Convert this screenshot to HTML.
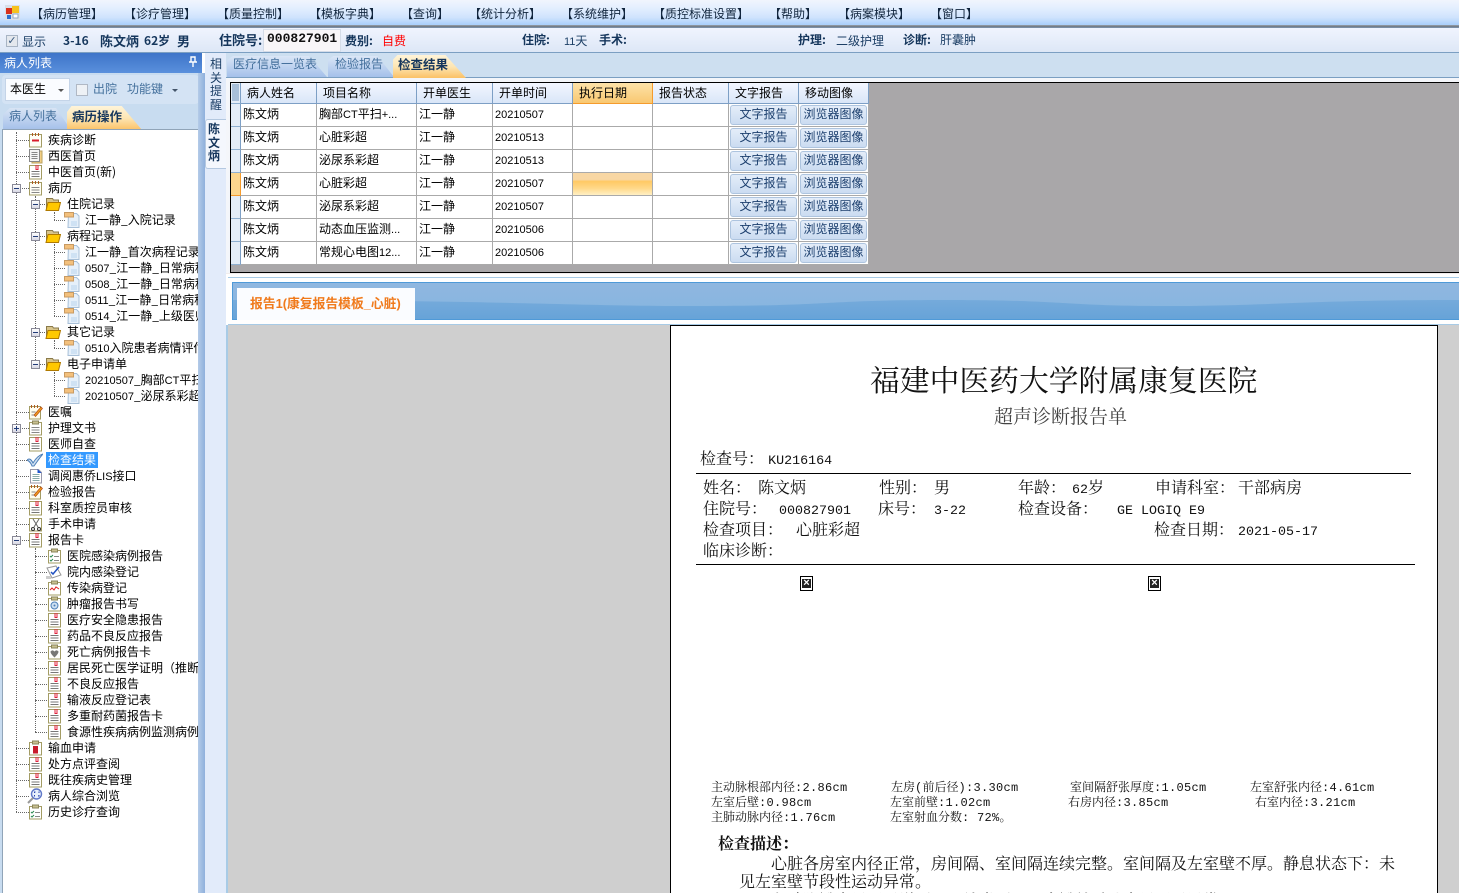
<!DOCTYPE html>
<html lang="zh">
<head>
<meta charset="utf-8">
<title>病历操作</title>
<style>
html,body{margin:0;padding:0;width:1459px;height:893px;overflow:hidden;background:#fff}
body{position:relative;font:12px/16px "WenQuanYi Zen Hei","Noto Sans CJK SC",sans-serif;color:#000}
.a{position:absolute;box-sizing:border-box}
.t{position:absolute;white-space:nowrap;line-height:16px}
.m{font:11px "Liberation Sans",sans-serif}
.b{font-weight:bold;color:#15365c}
.n{color:#1c3f66}
#menu{left:0;top:0;width:1459px;height:25px;background:linear-gradient(#f1f5fd 0,#e2eefe 35%,#cfe3fd 70%,#a9cefb 100%)}
#menu .t{top:6px;color:#10243c}
#bar{left:0;top:28px;width:1459px;height:25px;background:linear-gradient(#f0f4fe,#dde7f6);border-bottom:1px solid #7b9fc2}
#tree{left:3px;top:130px;width:195px;height:763px;background:#fff;overflow:hidden}
#tree .t{color:#000}
#tree svg{position:absolute;width:16px;height:16px;margin-left:-1px}
.dv{position:absolute;width:0;border-left:1px dotted #666}
.dh{position:absolute;height:0;border-top:1px dotted #666}
.ex{position:absolute;width:9px;height:9px;border:1px solid #8a8a98;background:linear-gradient(#fff,#d8d8e4);box-sizing:border-box}
.ex:before{content:"";position:absolute;left:1px;top:3px;width:5px;height:1px;background:#223c78}
.ex.p:after{content:"";position:absolute;left:3px;top:1px;width:1px;height:5px;background:#223c78}
table{position:absolute;left:231px;top:83px;border-collapse:separate;border-spacing:0;table-layout:fixed;width:638px;background:#fff}
td,th{box-sizing:border-box;height:23px;padding:0;border-right:1px solid #aaa;border-bottom:1px solid #aaa;font-weight:normal;text-align:left;white-space:nowrap;overflow:hidden;padding-left:2px;background:#fff;line-height:18px;padding-top:1px;vertical-align:top}
th{height:20px;background:linear-gradient(#f3f6ff,#d9e6f8);border-right:1px solid #7d9fc5;border-bottom:1px solid #7d9fc5;padding:0 0 0 6px;line-height:20px}
th.o{background:linear-gradient(#fde2a8,#f9c871);border-color:#f59b2c}
td.h,th.h{background:#e4edf7;border-right:1px solid #7d9fc5;border-bottom:1px solid #8fb0d0;padding:0}
th.h{background:linear-gradient(#a8bfd8,#a8bfd8) 1px 1px/7px 17px no-repeat #e4edf7}
td.s{background:#fcd68e;border-color:#f59b2c}
td.g{background:linear-gradient(#f8d7a4 0,#f8d7a4 30%,#ffc964 38%,#ffd98a 70%,#fff0c4 100%)}
td.c{padding:1px 1px 0 1px}
td.c div{height:20px;border:1px solid #adc4df;border-radius:3px;background:linear-gradient(#e4edf9,#cbdcf1);color:#1c3f6e;text-align:center;line-height:15px;box-sizing:border-box}
.p{position:absolute;white-space:nowrap;font-family:"Noto Serif CJK SC","Liberation Serif",serif;font-size:16px;line-height:20px;color:#111}
.p .l{font:13.33px "Liberation Mono",monospace}
.s12{font-size:12px;line-height:14px}
.s12 .l{font:12px "Liberation Mono",monospace;letter-spacing:.3px}
.x{position:absolute;width:13px;height:15px;border:1px solid #000;background:#fff;box-sizing:border-box}
.x:before{content:"";position:absolute;left:1px;top:2px;width:9px;height:9px;background:#222}
.x:after{content:"×";position:absolute;left:1px;top:2px;width:9px;height:9px;color:#fff;font:bold 11px/9px "Liberation Sans",sans-serif;text-align:center}
</style>
</head>
<body>
<svg width="0" height="0" style="position:absolute">
<defs>
<symbol id="clip" viewBox="0 0 16 16"><rect x="2.5" y="1.500" width="12" height="13.500" fill="#fff" stroke="#a39c64"/><path d="M4.500 7.500h8M4.500 10h8M4.500 12.500h8" stroke="#777"/><path d="M9 1v4.500h2V1" fill="none" stroke="#e0203c"/></symbol>
<symbol id="note" viewBox="0 0 16 16"><rect x="2.500" y="2.500" width="12" height="12.500" fill="#fffef6" stroke="#a39c64"/><path d="M5.500 1v3M8.500 1v3M11.500 1v3" stroke="#b05a20"/><path d="M4.500 7.500h8M4.500 10h8M4.500 12.500h8" stroke="#888"/></symbol>
<symbol id="red" viewBox="0 0 16 16"><rect x="2.500" y="2.500" width="12" height="12.500" fill="#fffef6" stroke="#a39c64"/><path d="M5.500 1v3M8.500 1v3M11.500 1v3" stroke="#b05a20"/><rect x="5" y="7.500" width="7" height="2" fill="#d81c2c"/></symbol>
<symbol id="pages" viewBox="0 0 16 16"><rect x="5" y="3" width="10" height="12" fill="#f3cf84" stroke="#b8a060"/><rect x="2.500" y="1.500" width="10" height="12" fill="#f6f6f6" stroke="#888"/><path d="M4.500 4.500h6M4.500 6.500h6M4.500 8.500h6M4.500 10.500h6" stroke="#888"/></symbol>
<symbol id="board" viewBox="0 0 16 16"><rect x="2.500" y="2.500" width="12" height="12.500" fill="#fff" stroke="#a39c64"/><rect x="5.500" y="1" width="6" height="3" fill="#c8c090" stroke="#8a845a"/><path d="M4.500 7.500h8M4.500 10h8M4.500 12.500h8" stroke="#888"/></symbol>
<symbol id="chk" viewBox="0 0 16 16"><rect x="2.500" y="2.500" width="12" height="12.500" fill="#fff" stroke="#a39c64"/><rect x="5.500" y="1" width="6" height="3" fill="#c8c090" stroke="#8a845a"/><path d="M4 8l1 1 2-2M4 12l1 1 2-2" fill="none" stroke="#2a8a50"/><path d="M8 8.500h5M8 12.500h5" stroke="#888"/></symbol>
<symbol id="folder" viewBox="0 0 16 16"><path d="M1.500 2.500h6l1 1.500h5v10h-12z" fill="#d8c48a" stroke="#8a7a4a"/><path d="M3 6.500h12.500l-2 8h-12.500z" fill="#ffc800" stroke="#b07a00"/></symbol>
<symbol id="doc" viewBox="0 0 16 16"><path d="M4.500 1.500h8l2.500 2.500v11.500h-11z" fill="#e6f0fa" stroke="#a8c0d8"/><path d="M7 9h6v5H7z" fill="#cfe2f4"/><rect x="0.500" y="0.500" width="9" height="4.500" fill="#f3c07c" stroke="#c89a62"/></symbol>
<symbol id="pen" viewBox="0 0 16 16"><rect x="2.500" y="2.500" width="11" height="12.500" fill="#fffef0" stroke="#a39c64"/><path d="M4.500 1v3M7.500 1v3M10.500 1v3" stroke="#b05a20"/><path d="M4.500 8h4M4.500 11h4" stroke="#888"/><path d="M7 11l7-8 1.500 1.500-7 8z" fill="#f0a020" stroke="#b04010" stroke-width=".6"/></symbol>
<symbol id="tick" viewBox="0 0 16 16"><path d="M0 8c2-2 4-1 6 3 3-5 6-8 10-9-3 3-6 8-9 12h-2C4 11 2 9 0 8z" fill="#cfe0f2" stroke="#4c7fb8"/></symbol>
<symbol id="lis" viewBox="0 0 16 16"><path d="M3.500 1.500h8l3 3v10.500h-11z" fill="#fff" stroke="#99a"/><path d="M10.500 1l4 4h-4z" fill="#1c54d0"/><path d="M5.500 6.500h7M5.500 8.500h7M5.500 10.500h7M5.500 12.500h7" stroke="#8aa"/></symbol>
<symbol id="scis" viewBox="0 0 16 16"><rect x="2.500" y="2.500" width="12" height="12.500" fill="#fff" stroke="#a39c64"/><path d="M6 3l5 8M12 3l-5 8" stroke="#666"/><circle cx="6" cy="13" r="1.500" fill="none" stroke="#333"/><circle cx="12" cy="13" r="1.500" fill="none" stroke="#333"/></symbol>
<symbol id="blood" viewBox="0 0 16 16"><rect x="2.500" y="2.500" width="12" height="12.500" fill="#fff" stroke="#a39c64"/><rect x="5.500" y="1" width="6" height="3" fill="#c8c090" stroke="#8a845a"/><rect x="6" y="6" width="5" height="7.500" fill="#c81c2c"/></symbol>
<symbol id="lens" viewBox="0 0 16 16"><circle cx="9.500" cy="6" r="5" fill="#e8f0fc" stroke="#6078c8" stroke-width="1.400"/><path d="M6 10l-5 5" stroke="#999" stroke-width="2"/><path d="M7.500 5V4h1M11.500 4h0.500v1M12 7v1h-1M8 8H7.500V7" stroke="#2844b0" fill="none"/></symbol>
<symbol id="wave" viewBox="0 0 16 16"><rect x="2.500" y="2.500" width="12" height="12.500" fill="#fff" stroke="#a39c64"/><rect x="5.500" y="1" width="6" height="3" fill="#c8c090" stroke="#8a845a"/><path d="M4 10l2-2 2 2 2-3 3 2" fill="none" stroke="#e02020"/></symbol>
<symbol id="tgt" viewBox="0 0 16 16"><rect x="2.500" y="2.500" width="12" height="12.500" fill="#fff" stroke="#a39c64"/><rect x="5.500" y="1" width="6" height="3" fill="#c8c090" stroke="#8a845a"/><circle cx="8.500" cy="9.500" r="3.500" fill="#cfe0f2" stroke="#4c7fb8"/><circle cx="8.500" cy="9.500" r="1" fill="#4c7fb8"/></symbol>
<symbol id="heart" viewBox="0 0 16 16"><rect x="2.500" y="2.500" width="12" height="12.500" fill="#fff" stroke="#a39c64"/><rect x="5.500" y="1" width="6" height="3" fill="#c8c090" stroke="#8a845a"/><path d="M4.500 7.500c2-2 3-1 4 0 1-1 2-2 4 0 0 2-2 4-4 6-2-2-4-4-4-6z" fill="#777"/></symbol>
<symbol id="inf" viewBox="0 0 16 16"><path d="M1 4l9-2 5 9-9 3z" fill="#fff" stroke="#999"/><path d="M5 8l2 2 6-7" fill="none" stroke="#2050c0" stroke-width="1.500"/><rect x="0" y="12" width="5" height="3" fill="#ccc"/></symbol>
</defs>
</svg>

<!-- top menu -->
<div class="a" id="menu">
<svg class="a" style="left:5px;top:5px;width:15px;height:15px" viewBox="0 0 15 15"><rect width="15" height="15" fill="#d8dfe8"/><rect x="1" y="3" width="6" height="6" fill="#d8301c"/><rect x="7" y="1" width="7" height="7" fill="#f6c21c"/><rect x="2" y="10" width="4" height="4" fill="#2c70d0"/><rect x="8" y="9" width="5" height="4" fill="#fff" stroke="#9ab"/></svg>
<span class="t" style="left:31px">【病历管理】</span>
<span class="t" style="left:124px">【诊疗管理】</span>
<span class="t" style="left:217px">【质量控制】</span>
<span class="t" style="left:309px">【模板字典】</span>
<span class="t" style="left:401px">【查询】</span>
<span class="t" style="left:469px">【统计分析】</span>
<span class="t" style="left:561px">【系统维护】</span>
<span class="t" style="left:653px">【质控标准设置】</span>
<span class="t" style="left:769px">【帮助】</span>
<span class="t" style="left:838px">【病案模块】</span>
<span class="t" style="left:930px">【窗口】</span>
</div>
<div class="a" style="left:0;top:25px;width:1459px;height:3px;background:linear-gradient(#9aa4b0,#6f7680 50%,#7f9ab8)"></div>

<!-- patient bar -->
<div class="a" id="bar"></div>
<div class="a" style="left:6px;top:35px;width:12px;height:12px;border:1px solid #a8b4c4;background:#e4e8ee;color:#3a5a80;font:11px/10px 'DejaVu Sans',sans-serif;text-align:center">✓</div>
<span class="t n" style="left:22px;top:34px">显示</span>
<span class="t b" style="left:63px;top:33px">3-16</span>
<span class="t b" style="left:100px;top:33px;font-size:13px">陈文炳</span>
<span class="t b" style="left:144px;top:33px">62岁</span>
<span class="t b" style="left:177px;top:33px;font-size:13px">男</span>
<span class="t b" style="left:219px;top:32px;font-size:13px">住院号:</span>
<div class="a" style="left:263px;top:29px;width:78px;height:23px;background:#f8f6f8;border:1px solid #d4dce8"></div>
<span class="t" style="left:267px;top:31px;font:bold 13px/16px 'Liberation Mono',monospace;color:#111">000827901</span>
<span class="t b" style="left:345px;top:33px">费别:</span>
<span class="t" style="left:382px;top:33px;color:#f00">自费</span>
<span class="t b" style="left:522px;top:32px">住院:</span>
<span class="t n" style="left:564px;top:33px"><span class="m">11</span>天</span>
<span class="t b" style="left:599px;top:32px">手术:</span>
<span class="t b" style="left:798px;top:32px">护理:</span>
<span class="t n" style="left:836px;top:33px">二级护理</span>
<span class="t b" style="left:903px;top:32px">诊断:</span>
<span class="t n" style="left:940px;top:32px">肝囊肿</span>

<!-- left panel -->
<div class="a" style="left:0;top:53px;width:200px;height:840px;background:#c8dcf0"></div>
<div class="a" style="left:0;top:53px;width:202px;height:20px;background:linear-gradient(#3d74c8,#5a90dc)"></div>
<span class="t" style="left:4px;top:55px;color:#fff">病人列表</span>
<svg class="a" style="left:188px;top:56px;width:10px;height:12px" viewBox="0 0 10 12"><path d="M3 1h4v5H3zM1 6h8M5 6v5" fill="none" stroke="#fff" stroke-width="1.400"/></svg>
<div class="a" style="left:2px;top:75px;width:197px;height:29px;background:#d4e3f4;border-radius:4px"></div>
<div class="a" style="left:5px;top:78px;width:65px;height:23px;background:#fafcff;border:1px solid #c4d4e8"></div>
<span class="t" style="left:10px;top:81px">本医生</span>
<div class="a" style="left:58px;top:89px;border:3px solid transparent;border-top:3px solid #555"></div>
<div class="a" style="left:76px;top:84px;width:12px;height:12px;border:1px solid #b0b8c4;background:#eef1f5"></div>
<span class="t" style="left:93px;top:81px;color:#44709c">出院</span>
<span class="t" style="left:127px;top:81px;color:#44709c">功能键</span>
<div class="a" style="left:172px;top:89px;border:3px solid transparent;border-top:3px solid #44556a"></div>
<div class="a" style="left:3px;top:108px;width:68px;height:22px;background:linear-gradient(#d8e4f4,#a4c0ea);clip-path:polygon(0 100%,0 30%,10% 0,78% 0,100% 100%)"></div>
<span class="t" style="left:9px;top:108px;color:#44709c">病人列表</span>
<div class="a" style="left:67px;top:106px;width:75px;height:24px;background:linear-gradient(#fff4d8 0,#fde6b4 50%,#fbc166 100%);clip-path:polygon(0 100%,0 25%,6% 0,73% 0,100% 100%)"></div>
<span class="t b" style="left:72px;top:108px;font-size:12.500px">病历操作</span>
<div class="a" style="left:2px;top:129px;width:198px;height:764px;border:1px solid #90a4b8;background:#fff"></div>

<div class="a" id="tree">
<div class="dv" style="left:13px;top:2px;height:680px"></div>
<div class="dv" style="left:32px;top:66px;height:168px"></div>
<div class="dv" style="left:32px;top:418px;height:184px"></div>
<div class="dv" style="left:51px;top:82px;height:8px"></div>
<div class="dv" style="left:51px;top:114px;height:72px"></div>
<div class="dv" style="left:51px;top:210px;height:8px"></div>
<div class="dv" style="left:51px;top:242px;height:24px"></div>
<div class="dh" style="left:13px;top:10px;width:13px"></div><div class="dh" style="left:13px;top:26px;width:13px"></div><div class="dh" style="left:13px;top:42px;width:13px"></div><div class="dh" style="left:13px;top:58px;width:13px"></div>
<div class="dh" style="left:13px;top:282px;width:13px"></div><div class="dh" style="left:13px;top:298px;width:13px"></div><div class="dh" style="left:13px;top:314px;width:13px"></div><div class="dh" style="left:13px;top:330px;width:13px"></div><div class="dh" style="left:13px;top:346px;width:13px"></div><div class="dh" style="left:13px;top:362px;width:13px"></div><div class="dh" style="left:13px;top:378px;width:13px"></div><div class="dh" style="left:13px;top:394px;width:13px"></div><div class="dh" style="left:13px;top:410px;width:13px"></div>
<div class="dh" style="left:13px;top:618px;width:13px"></div><div class="dh" style="left:13px;top:634px;width:13px"></div><div class="dh" style="left:13px;top:650px;width:13px"></div><div class="dh" style="left:13px;top:666px;width:13px"></div><div class="dh" style="left:13px;top:682px;width:13px"></div>
<div class="dh" style="left:32px;top:74px;width:12px"></div><div class="dh" style="left:32px;top:106px;width:12px"></div><div class="dh" style="left:32px;top:202px;width:12px"></div><div class="dh" style="left:32px;top:234px;width:12px"></div>
<div class="dh" style="left:32px;top:426px;width:12px"></div><div class="dh" style="left:32px;top:442px;width:12px"></div><div class="dh" style="left:32px;top:458px;width:12px"></div><div class="dh" style="left:32px;top:474px;width:12px"></div><div class="dh" style="left:32px;top:490px;width:12px"></div><div class="dh" style="left:32px;top:506px;width:12px"></div><div class="dh" style="left:32px;top:522px;width:12px"></div><div class="dh" style="left:32px;top:538px;width:12px"></div><div class="dh" style="left:32px;top:554px;width:12px"></div><div class="dh" style="left:32px;top:570px;width:12px"></div><div class="dh" style="left:32px;top:586px;width:12px"></div><div class="dh" style="left:32px;top:602px;width:12px"></div>
<div class="dh" style="left:51px;top:90px;width:11px"></div><div class="dh" style="left:51px;top:122px;width:11px"></div><div class="dh" style="left:51px;top:138px;width:11px"></div><div class="dh" style="left:51px;top:154px;width:11px"></div><div class="dh" style="left:51px;top:170px;width:11px"></div><div class="dh" style="left:51px;top:186px;width:11px"></div><div class="dh" style="left:51px;top:218px;width:11px"></div><div class="dh" style="left:51px;top:250px;width:11px"></div><div class="dh" style="left:51px;top:266px;width:11px"></div>

<div class="ex" style="left:9px;top:54px"></div><div class="ex" style="left:28px;top:70px"></div><div class="ex" style="left:28px;top:102px"></div><div class="ex" style="left:28px;top:198px"></div><div class="ex" style="left:28px;top:230px"></div><div class="ex p" style="left:9px;top:294px"></div><div class="ex" style="left:9px;top:406px"></div>

<svg style="left:25px;top:2px"><use href="#red"/></svg><span class="t" style="left:45px;top:2px">疾病诊断</span>
<svg style="left:25px;top:18px"><use href="#pages"/></svg><span class="t" style="left:45px;top:18px">西医首页</span>
<svg style="left:25px;top:34px"><use href="#clip"/></svg><span class="t" style="left:45px;top:34px">中医首页(新)</span>
<svg style="left:25px;top:50px"><use href="#note"/></svg><span class="t" style="left:45px;top:50px">病历</span>
<svg style="left:43px;top:66px"><use href="#folder"/></svg><span class="t" style="left:64px;top:66px">住院记录</span>
<svg style="left:62px;top:82px"><use href="#doc"/></svg><span class="t" style="left:82px;top:82px">江一静_入院记录</span>
<svg style="left:43px;top:98px"><use href="#folder"/></svg><span class="t" style="left:64px;top:98px">病程记录</span>
<svg style="left:62px;top:114px"><use href="#doc"/></svg><span class="t" style="left:82px;top:114px">江一静_首次病程记录</span>
<svg style="left:62px;top:130px"><use href="#doc"/></svg><span class="t" style="left:82px;top:130px"><span class="m">0507</span>_江一静_日常病程</span>
<svg style="left:62px;top:146px"><use href="#doc"/></svg><span class="t" style="left:82px;top:146px"><span class="m">0508</span>_江一静_日常病程</span>
<svg style="left:62px;top:162px"><use href="#doc"/></svg><span class="t" style="left:82px;top:162px"><span class="m">0511</span>_江一静_日常病程</span>
<svg style="left:62px;top:178px"><use href="#doc"/></svg><span class="t" style="left:82px;top:178px"><span class="m">0514</span>_江一静_上级医师</span>
<svg style="left:43px;top:194px"><use href="#folder"/></svg><span class="t" style="left:64px;top:194px">其它记录</span>
<svg style="left:62px;top:210px"><use href="#doc"/></svg><span class="t" style="left:82px;top:210px"><span class="m">0510</span>入院患者病情评估</span>
<svg style="left:43px;top:226px"><use href="#folder"/></svg><span class="t" style="left:64px;top:226px">电子申请单</span>
<svg style="left:62px;top:242px"><use href="#doc"/></svg><span class="t" style="left:82px;top:242px"><span class="m">20210507</span>_胸部<span class="m">CT</span>平扫</span>
<svg style="left:62px;top:258px"><use href="#doc"/></svg><span class="t" style="left:82px;top:258px"><span class="m">20210507</span>_泌尿系彩超</span>
<svg style="left:25px;top:274px"><use href="#pen"/></svg><span class="t" style="left:45px;top:274px">医嘱</span>
<svg style="left:25px;top:290px"><use href="#board"/></svg><span class="t" style="left:45px;top:290px">护理文书</span>
<svg style="left:25px;top:306px"><use href="#clip"/></svg><span class="t" style="left:45px;top:306px">医师自查</span>
<svg style="left:25px;top:322px"><use href="#tick"/></svg><span class="t" style="left:43px;top:322px;background:#3399ff;color:#fff;padding:0 2px;height:16px">检查结果</span>
<svg style="left:25px;top:338px"><use href="#lis"/></svg><span class="t" style="left:45px;top:338px">调阅惠侨<span class="m">LIS</span>接口</span>
<svg style="left:25px;top:354px"><use href="#pen"/></svg><span class="t" style="left:45px;top:354px">检验报告</span>
<svg style="left:25px;top:370px"><use href="#clip"/></svg><span class="t" style="left:45px;top:370px">科室质控员审核</span>
<svg style="left:25px;top:386px"><use href="#scis"/></svg><span class="t" style="left:45px;top:386px">手术申请</span>
<svg style="left:25px;top:402px"><use href="#clip"/></svg><span class="t" style="left:45px;top:402px">报告卡</span>
<svg style="left:44px;top:418px"><use href="#chk"/></svg><span class="t" style="left:64px;top:418px">医院感染病例报告</span>
<svg style="left:44px;top:434px"><use href="#inf"/></svg><span class="t" style="left:64px;top:434px">院内感染登记</span>
<svg style="left:44px;top:450px"><use href="#wave"/></svg><span class="t" style="left:64px;top:450px">传染病登记</span>
<svg style="left:44px;top:466px"><use href="#tgt"/></svg><span class="t" style="left:64px;top:466px">肿瘤报告书写</span>
<svg style="left:44px;top:482px"><use href="#clip"/></svg><span class="t" style="left:64px;top:482px">医疗安全隐患报告</span>
<svg style="left:44px;top:498px"><use href="#clip"/></svg><span class="t" style="left:64px;top:498px">药品不良反应报告</span>
<svg style="left:44px;top:514px"><use href="#heart"/></svg><span class="t" style="left:64px;top:514px">死亡病例报告卡</span>
<svg style="left:44px;top:530px"><use href="#clip"/></svg><span class="t" style="left:64px;top:530px">居民死亡医学证明（推断</span>
<svg style="left:44px;top:546px"><use href="#clip"/></svg><span class="t" style="left:64px;top:546px">不良反应报告</span>
<svg style="left:44px;top:562px"><use href="#clip"/></svg><span class="t" style="left:64px;top:562px">输液反应登记表</span>
<svg style="left:44px;top:578px"><use href="#clip"/></svg><span class="t" style="left:64px;top:578px">多重耐药菌报告卡</span>
<svg style="left:44px;top:594px"><use href="#clip"/></svg><span class="t" style="left:64px;top:594px">食源性疾病病例监测病例</span>
<svg style="left:25px;top:610px"><use href="#blood"/></svg><span class="t" style="left:45px;top:610px">输血申请</span>
<svg style="left:25px;top:626px"><use href="#clip"/></svg><span class="t" style="left:45px;top:626px">处方点评查阅</span>
<svg style="left:25px;top:642px"><use href="#clip"/></svg><span class="t" style="left:45px;top:642px">既往疾病史管理</span>
<svg style="left:25px;top:658px"><use href="#lens"/></svg><span class="t" style="left:45px;top:658px">病人综合浏览</span>
<svg style="left:25px;top:674px"><use href="#chk"/></svg><span class="t" style="left:45px;top:674px">历史诊疗查询</span>
</div>

<!-- vertical strip -->
<div class="a" style="left:198px;top:73px;width:7px;height:820px;background:linear-gradient(90deg,#b4cbe8,#8fb0dc)"></div>
<div class="a" style="left:205px;top:53px;width:21px;height:840px;background:#e2ebfa"></div>
<div class="a" style="left:205px;top:119px;width:21px;height:50px;background:#f4f7fd;border:1px solid #b4c8e0;border-right:0;border-radius:3px 0 0 3px"></div>
<span class="t" style="left:210px;top:57px;width:13px;white-space:normal;line-height:13.600px;color:#1c3f66">相关提醒</span>
<span class="t b" style="left:208px;top:122px;width:13px;white-space:normal;line-height:13.500px">陈文炳</span>

<!-- right tabs -->
<div class="a" style="left:226px;top:53px;width:1233px;height:25px;background:#cddff0;border-bottom:1px solid #7b9fc2"></div>
<div class="a" style="left:227px;top:56px;width:100px;height:21px;background:linear-gradient(#dae6f6,#a4c0ea);clip-path:polygon(0 100%,0 20%,6% 0,82% 0,100% 100%)"></div>
<span class="t" style="left:233px;top:56px;color:#44709c">医疗信息一览表</span>
<div class="a" style="left:328px;top:56px;width:66px;height:21px;background:linear-gradient(#dae6f6,#a4c0ea);clip-path:polygon(0 100%,0 20%,8% 0,75% 0,100% 100%)"></div>
<span class="t" style="left:335px;top:56px;color:#44709c">检验报告</span>
<div class="a" style="left:393px;top:55px;width:73px;height:23px;background:linear-gradient(#fff4d8,#fde6b4 50%,#fbc166);clip-path:polygon(0 100%,0 20%,6% 0,72% 0,100% 100%)"></div>
<span class="t b" style="left:398px;top:56px;font-size:12.500px">检查结果</span>

<!-- grid -->
<div class="a" style="left:226px;top:78px;width:1233px;height:815px;background:#f4f6fa"></div>
<div class="a" style="left:230px;top:82px;width:1240px;height:191px;background:#a9a7a9;border:1px solid #000"></div>
<table>
<colgroup><col style="width:10px"><col style="width:76px"><col style="width:100px"><col style="width:76px"><col style="width:80px"><col style="width:80px"><col style="width:76px"><col style="width:70px"><col style="width:70px"></colgroup>
<tr><th class="h"></th><th>病人姓名</th><th>项目名称</th><th>开单医生</th><th>开单时间</th><th class="o">执行日期</th><th>报告状态</th><th>文字报告</th><th>移动图像</th></tr>
<tr><td class="h"></td><td>陈文炳</td><td>胸部<span class="m">CT</span>平扫<span class="m">+...</span></td><td>江一静</td><td><span class="m">20210507</span></td><td></td><td></td><td class="c"><div>文字报告</div></td><td class="c"><div>浏览器图像</div></td></tr>
<tr><td class="h"></td><td>陈文炳</td><td>心脏彩超</td><td>江一静</td><td><span class="m">20210513</span></td><td></td><td></td><td class="c"><div>文字报告</div></td><td class="c"><div>浏览器图像</div></td></tr>
<tr><td class="h"></td><td>陈文炳</td><td>泌尿系彩超</td><td>江一静</td><td><span class="m">20210513</span></td><td></td><td></td><td class="c"><div>文字报告</div></td><td class="c"><div>浏览器图像</div></td></tr>
<tr><td class="h s"></td><td>陈文炳</td><td>心脏彩超</td><td>江一静</td><td><span class="m">20210507</span></td><td class="g"></td><td></td><td class="c"><div>文字报告</div></td><td class="c"><div>浏览器图像</div></td></tr>
<tr><td class="h"></td><td>陈文炳</td><td>泌尿系彩超</td><td>江一静</td><td><span class="m">20210507</span></td><td></td><td></td><td class="c"><div>文字报告</div></td><td class="c"><div>浏览器图像</div></td></tr>
<tr><td class="h"></td><td>陈文炳</td><td>动态血压监测<span class="m">...</span></td><td>江一静</td><td><span class="m">20210506</span></td><td></td><td></td><td class="c"><div>文字报告</div></td><td class="c"><div>浏览器图像</div></td></tr>
<tr><td class="h"></td><td>陈文炳</td><td>常规心电图<span class="m">12...</span></td><td>江一静</td><td><span class="m">20210506</span></td><td></td><td></td><td class="c"><div>文字报告</div></td><td class="c"><div>浏览器图像</div></td></tr>
</table>

<!-- report tab band -->
<div class="a" style="left:226px;top:273px;width:1233px;height:52px;background:#fff;border-top:1px solid #f0ecec"></div>
<div class="a" style="left:228px;top:277px;width:1231px;height:48px;border-top:1px solid #a8cbe6;border-bottom:1px solid #a8cbe6;background:#fff"></div>
<svg class="a" style="left:232px;top:282px;width:1227px;height:38px" viewBox="232 282 1227 38" preserveAspectRatio="none">
<defs><linearGradient id="bt" x1="0" y1="0" x2="0" y2="1"><stop offset="0" stop-color="#90b7e0"/><stop offset="1" stop-color="#84b5df"/></linearGradient><linearGradient id="bb" x1="0" y1="0" x2="0" y2="1"><stop offset="0" stop-color="#75aadb"/><stop offset="1" stop-color="#66a3d8"/></linearGradient></defs>
<rect x="232" y="282" width="1227" height="38" fill="url(#bt)"/>
<path d="M232 300C500 300 560 306 698 306S820 300 945 300 1060 306 1166 306 1300 300 1459 300V320H232Z" fill="url(#bb)"/>
<path d="M232 282.500H1459M232.500 282V320M232 319.500H1459" fill="none" stroke="#4f9ad8"/>
</svg>
<div class="a" style="left:237px;top:288px;width:178px;height:32px;background:#fafcff"></div>
<span class="t" style="left:250px;top:296px;font-family:'Liberation Sans','Noto Sans CJK SC',sans-serif;font-weight:bold;font-size:12.800px;color:#f07a1c">报告1(康复报告模板_心脏)</span>

<!-- report viewer -->
<div class="a" style="left:226px;top:325px;width:2px;height:568px;background:#a8cbe6"></div>
<div class="a" style="left:228px;top:325px;width:1231px;height:568px;background:#cfcfcf;overflow:hidden"></div>
<div class="a" style="left:670px;top:325px;width:768px;height:580px;background:#fff;border:1px solid #000"></div>

<div class="p" style="left:870px;top:359px;font-size:29.800px;line-height:40px">福建中医药大学附属康复医院</div>
<div class="p" style="left:994px;top:404px;font-size:19px;line-height:24px;color:#444">超声诊断报告单</div>
<div class="p" style="left:700px;top:448px">检查号： <span class="l">KU216164</span></div>
<div class="a" style="left:696px;top:473px;width:715px;height:1px;background:#000"></div>
<div class="p" style="left:703px;top:477px">姓名：</div><div class="p" style="left:758px;top:477px">陈文炳</div>
<div class="p" style="left:879px;top:477px">性别：</div><div class="p" style="left:934px;top:477px">男</div>
<div class="p" style="left:1018px;top:477px">年龄：</div><div class="p" style="left:1072px;top:477px"><span class="l">62</span>岁</div>
<div class="p" style="left:1155px;top:477px">申请科室：</div><div class="p" style="left:1238px;top:477px">干部病房</div>
<div class="p" style="left:703px;top:498px">住院号：</div><div class="p" style="left:779px;top:498px"><span class="l">000827901</span></div>
<div class="p" style="left:878px;top:498px">床号：</div><div class="p" style="left:934px;top:498px"><span class="l">3-22</span></div>
<div class="p" style="left:1018px;top:498px">检查设备：</div><div class="p" style="left:1117px;top:498px"><span class="l">GE LOGIQ E9</span></div>
<div class="p" style="left:703px;top:519px">检查项目：</div><div class="p" style="left:796px;top:519px">心脏彩超</div>
<div class="p" style="left:1154px;top:519px">检查日期：</div><div class="p" style="left:1238px;top:519px"><span class="l">2021-05-17</span></div>
<div class="p" style="left:703px;top:540px">临床诊断：</div>
<div class="a" style="left:696px;top:564px;width:719px;height:1px;background:#000"></div>
<div class="x" style="left:800px;top:576px"></div>
<div class="x" style="left:1148px;top:576px"></div>

<div class="p s12" style="left:711px;top:780px">主动脉根部内径<span class="l">:2.86cm</span></div>
<div class="p s12" style="left:891px;top:780px">左房<span class="l">(</span>前后径<span class="l">):3.30cm</span></div>
<div class="p s12" style="left:1070px;top:780px">室间隔舒张厚度<span class="l">:1.05cm</span></div>
<div class="p s12" style="left:1250px;top:780px">左室舒张内径<span class="l">:4.61cm</span></div>
<div class="p s12" style="left:711px;top:795px">左室后壁<span class="l">:0.98cm</span></div>
<div class="p s12" style="left:890px;top:795px">左室前壁<span class="l">:1.02cm</span></div>
<div class="p s12" style="left:1068px;top:795px">右房内径<span class="l">:3.85cm</span></div>
<div class="p s12" style="left:1255px;top:795px">右室内径<span class="l">:3.21cm</span></div>
<div class="p s12" style="left:711px;top:810px">主肺动脉内径<span class="l">:1.76cm</span></div>
<div class="p s12" style="left:890px;top:810px">左室射血分数<span class="l">: 72%</span>。</div>
<div class="p" style="left:718px;top:833px;font-weight:bold">检查描述：</div>
<div class="p" style="left:771px;top:853px">心脏各房室内径正常，房间隔、室间隔连续完整。室间隔及左室壁不厚。静息状态下：未</div>
<div class="p" style="left:739px;top:871px">见左室壁节段性运动异常。</div>
<div class="p" style="left:771px;top:890px">主动脉瓣未见明显增厚，开放尚可。二尖瓣前后叶未见明显异常。</div>
</body>
</html>
